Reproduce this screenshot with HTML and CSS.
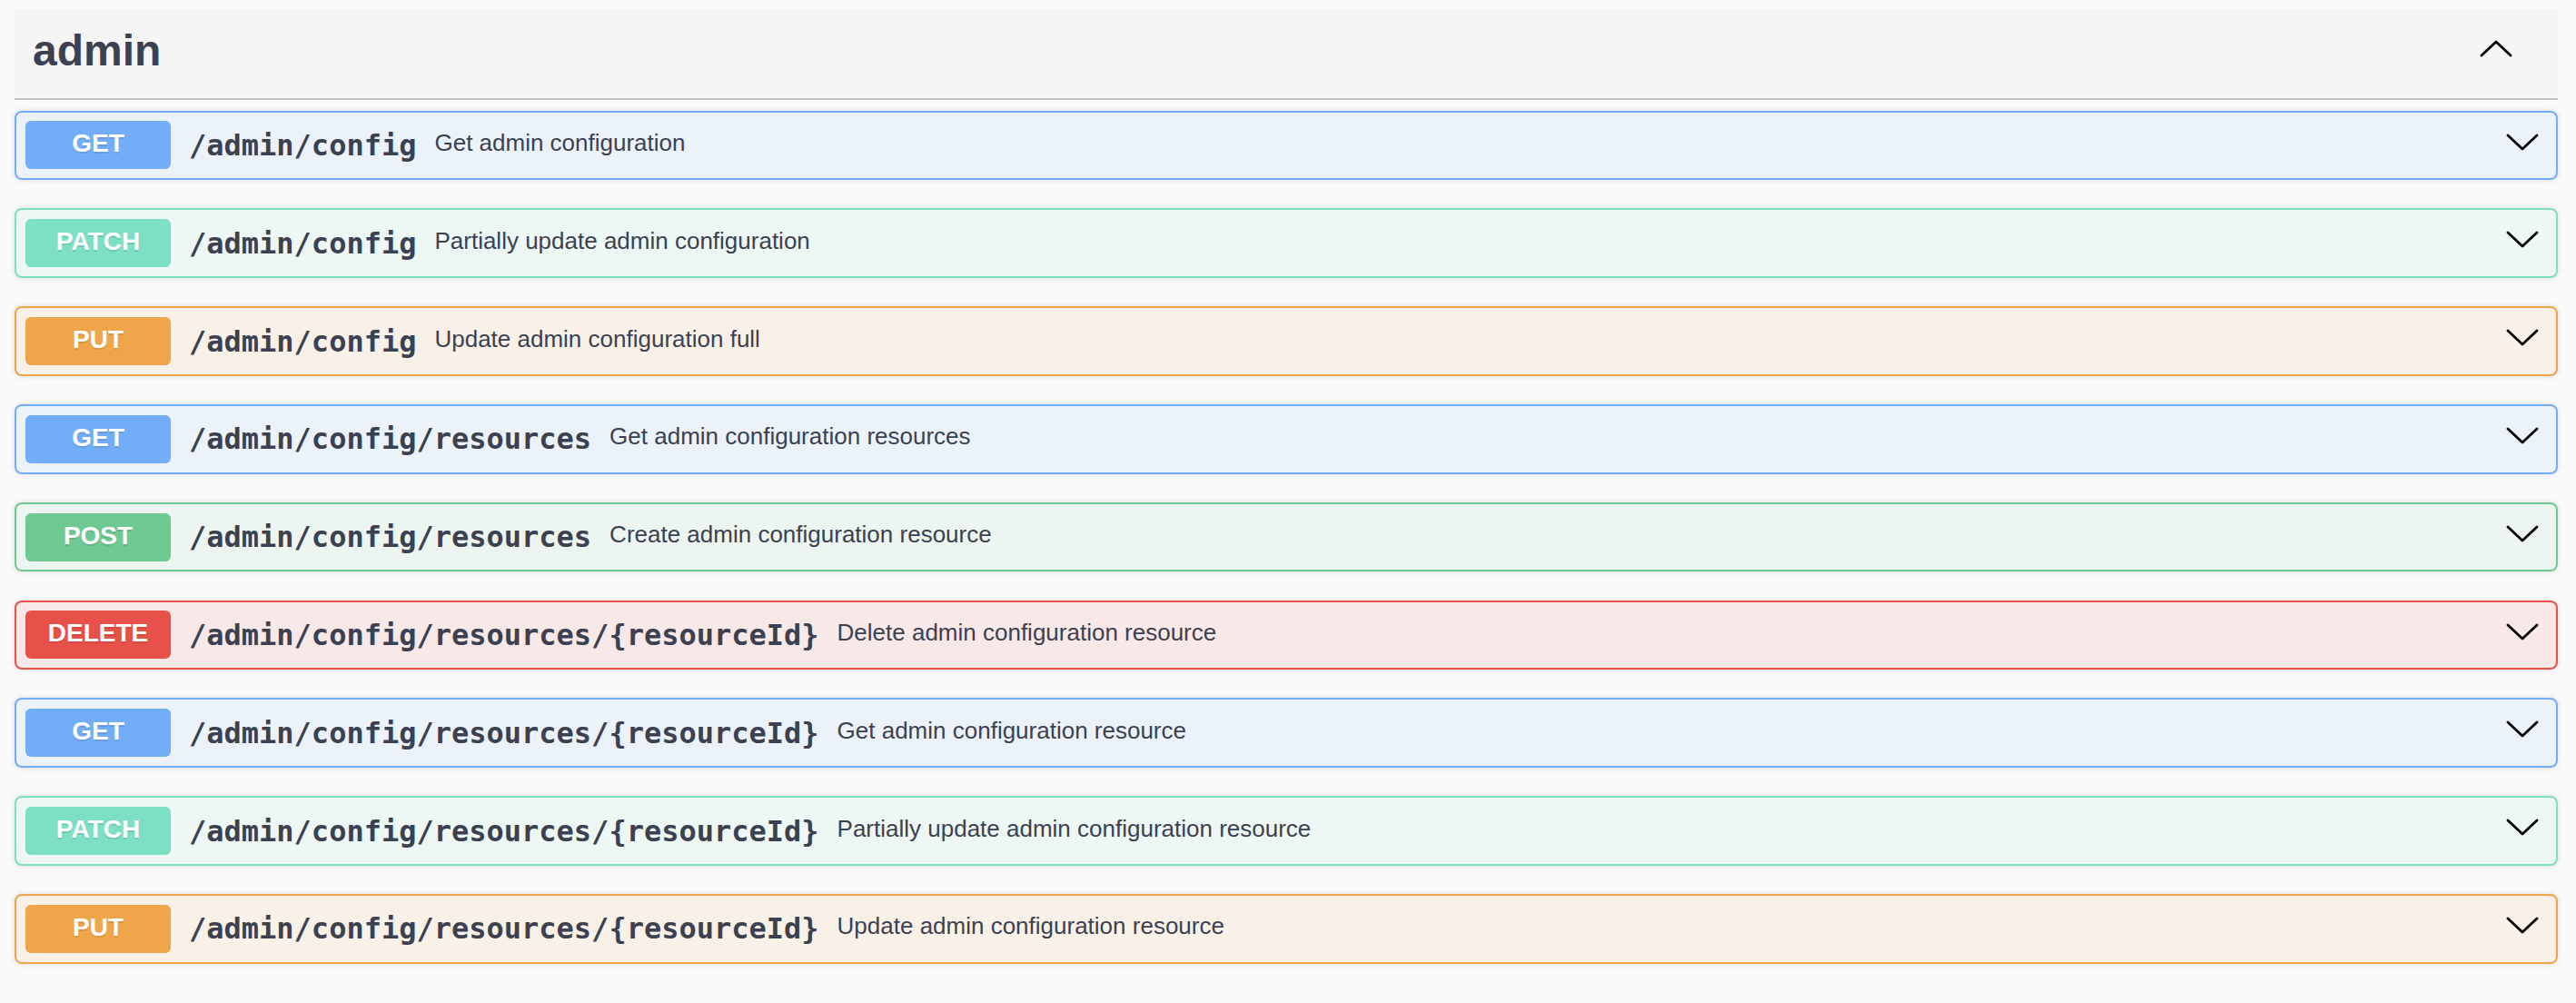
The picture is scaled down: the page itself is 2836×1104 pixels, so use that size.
FILE: index.html
```html
<!DOCTYPE html>
<html lang="en">
<head>
<meta charset="utf-8">
<title>admin</title>
<link rel="stylesheet" href="styles.css">
</head>
<body>
<div class="wrapper">
  <section class="tag-section">
    <h3 class="tag-header">
      <span class="tag-title">admin</span>
      <svg class="arrow arrow-up" width="36" height="22" viewBox="0 0 36 22"><polyline points="2,19 18,4 34,19"/></svg>
    </h3>
    <div class="opblocks">
      <div class="opblock get">
        <span class="method">GET</span>
        <span class="path">/admin/config</span>
        <span class="desc">Get admin configuration</span>
        <svg class="arrow arrow-down" width="36" height="22" viewBox="0 0 36 22"><polyline points="2,3 18,18 34,3"/></svg>
      </div>
      <div class="opblock patch">
        <span class="method">PATCH</span>
        <span class="path">/admin/config</span>
        <span class="desc">Partially update admin configuration</span>
        <svg class="arrow arrow-down" width="36" height="22" viewBox="0 0 36 22"><polyline points="2,3 18,18 34,3"/></svg>
      </div>
      <div class="opblock put">
        <span class="method">PUT</span>
        <span class="path">/admin/config</span>
        <span class="desc">Update admin configuration full</span>
        <svg class="arrow arrow-down" width="36" height="22" viewBox="0 0 36 22"><polyline points="2,3 18,18 34,3"/></svg>
      </div>
      <div class="opblock get">
        <span class="method">GET</span>
        <span class="path">/admin/config/resources</span>
        <span class="desc">Get admin configuration resources</span>
        <svg class="arrow arrow-down" width="36" height="22" viewBox="0 0 36 22"><polyline points="2,3 18,18 34,3"/></svg>
      </div>
      <div class="opblock post">
        <span class="method">POST</span>
        <span class="path">/admin/config/resources</span>
        <span class="desc">Create admin configuration resource</span>
        <svg class="arrow arrow-down" width="36" height="22" viewBox="0 0 36 22"><polyline points="2,3 18,18 34,3"/></svg>
      </div>
      <div class="opblock delete">
        <span class="method">DELETE</span>
        <span class="path">/admin/config/resources/{resourceId}</span>
        <span class="desc">Delete admin configuration resource</span>
        <svg class="arrow arrow-down" width="36" height="22" viewBox="0 0 36 22"><polyline points="2,3 18,18 34,3"/></svg>
      </div>
      <div class="opblock get">
        <span class="method">GET</span>
        <span class="path">/admin/config/resources/{resourceId}</span>
        <span class="desc">Get admin configuration resource</span>
        <svg class="arrow arrow-down" width="36" height="22" viewBox="0 0 36 22"><polyline points="2,3 18,18 34,3"/></svg>
      </div>
      <div class="opblock patch">
        <span class="method">PATCH</span>
        <span class="path">/admin/config/resources/{resourceId}</span>
        <span class="desc">Partially update admin configuration resource</span>
        <svg class="arrow arrow-down" width="36" height="22" viewBox="0 0 36 22"><polyline points="2,3 18,18 34,3"/></svg>
      </div>
      <div class="opblock put">
        <span class="method">PUT</span>
        <span class="path">/admin/config/resources/{resourceId}</span>
        <span class="desc">Update admin configuration resource</span>
        <svg class="arrow arrow-down" width="36" height="22" viewBox="0 0 36 22"><polyline points="2,3 18,18 34,3"/></svg>
      </div>
    </div>
  </section>
</div>
</body>
</html>
```
FILE: styles.css
```css
html, body {
  margin: 0;
  padding: 0;
  background: #fafafa;
}
body {
  font-family: "Liberation Sans", Arial, sans-serif;
  color: #3b4151;
}
.wrapper {
  padding: 10px 20px 0 16px;
}
.tag-header {
  display: flex;
  align-items: center;
  justify-content: space-between;
  box-sizing: border-box;
  height: 100px;
  margin: 0 0 11.7px 0;
  padding: 0 50px 0 20px;
  background: #f5f5f5;
  border-bottom: 2px solid #c2c3c7;
}
.tag-title {
  font-size: 48px;
  font-weight: 700;
  line-height: 54px;
  color: #3b4151;
  margin-bottom: 7px;
}
.arrow {
  flex: none;
  display: block;
}
.arrow polyline {
  fill: none;
  stroke: #000;
  stroke-width: 2.8;
  stroke-linecap: round;
  stroke-linejoin: round;
}
.arrow-up {
  margin-bottom: 13px;
}
.opblocks {
  display: flex;
  flex-direction: column;
}
.opblock {
  display: flex;
  align-items: center;
  box-sizing: border-box;
  height: 76.5px;
  margin-bottom: 31.3px;
  padding: 0 10px;
  border: 2px solid;
  border-radius: 8px;
  box-shadow: 0 0 6px rgba(0, 0, 0, 0.12);
}
.method {
  flex: none;
  box-sizing: border-box;
  width: 160px;
  height: 53px;
  display: flex;
  align-items: center;
  justify-content: center;
  padding-bottom: 3px;
  border-radius: 6px;
  color: #fff;
  font-family: "Liberation Sans", Arial, sans-serif;
  font-size: 28px;
  font-weight: 700;
  text-shadow: 0 2px 0 rgba(0, 0, 0, 0.1);
}
.path {
  flex: none;
  padding: 0 20px;
  font-family: "DejaVu Sans Mono", "Liberation Mono", monospace;
  font-size: 32px;
  font-weight: 700;
  color: #3b4151;
}
.desc {
  flex: 1;
  font-family: "Liberation Sans", Arial, sans-serif;
  font-size: 26px;
  color: #3b4151;
  margin-bottom: 5px;
}
.arrow-down {
  margin-right: 9.5px;
  margin-bottom: 6.5px;
}

.opblock.get { background: #ecf2fa; border-color: #72aef8; }
.opblock.get .method { background: #72aef8; }
.opblock.patch { background: #edf7f3; border-color: #7ddfc3; }
.opblock.patch .method { background: #7ddfc3; }
.opblock.put { background: #f9f1e7; border-color: #efa54a; }
.opblock.put .method { background: #efa54a; }
.opblock.post { background: #ecf5ef; border-color: #6fc993; }
.opblock.post .method { background: #6fc993; }
.opblock.delete { background: #f8e8e7; border-color: #e8504a; }
.opblock.delete .method { background: #e8504a; }
```
